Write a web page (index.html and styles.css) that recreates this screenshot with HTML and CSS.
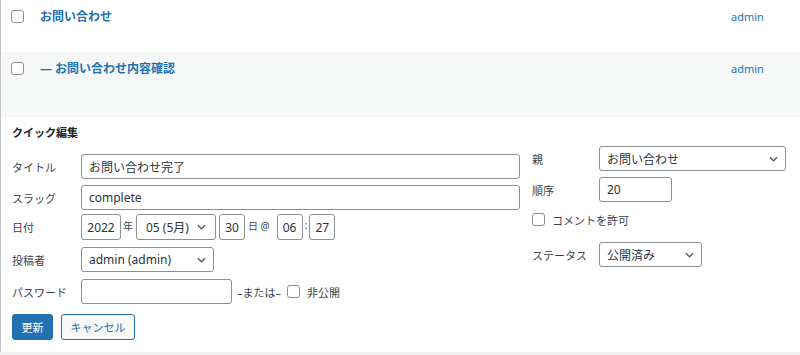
FILE: index.html
```html
<!DOCTYPE html>
<html lang="ja">
<head>
  <meta charset="UTF-8" />
  <title>固定ページ一覧</title>
  <link rel="stylesheet" href="styles.css">
</head>
<body>
  <div class="list">
    <div class="row">
      <span class="cb"></span>
      <a class="row-title">お問い合わせ</a>
      <a class="author">admin</a>
    </div>
    <div class="row alt tall">
      <span class="cb"></span>
      <a class="row-title">— お問い合わせ内容確認</a>
      <a class="author">admin</a>
    </div>

    <div class="quick-edit">
      <div class="qe-left">
        <h3 class="qe-title">クイック編集</h3>
        <div class="field">
          <span class="label">タイトル</span>
          <span class="input wide">お問い合わせ完了</span>
        </div>
        <div class="field f-slug">
          <span class="label">スラッグ</span>
          <span class="input wide">complete</span>
        </div>
        <div class="field f-date">
          <span class="label">日付</span>
          <span class="input num year">2022</span>
          <span class="unit">年</span>
          <span class="select month">05 (5月)
            <svg viewBox="0 0 10 6"><path d="M1 1l4 4 4-4"/></svg>
          </span>
          <span class="input num day">30</span>
          <span class="unit at">日 @</span>
          <span class="input num hm">06</span>
          <span class="unit colon">:</span>
          <span class="input num hm">27</span>
        </div>
        <div class="field f-author">
          <span class="label">投稿者</span>
          <span class="select author-sel">admin (admin)
            <svg viewBox="0 0 10 6"><path d="M1 1l4 4 4-4"/></svg>
          </span>
        </div>
        <div class="field f-pass">
          <span class="label">パスワード</span>
          <span class="input pass"></span>
          <span class="or">–または–</span>
          <span class="cb"></span>
          <span class="cb-label">非公開</span>
        </div>
        <div class="actions">
          <button class="btn primary">更新</button>
          <button class="btn secondary">キャンセル</button>
        </div>
      </div>

      <div class="qe-right">
        <div class="field">
          <span class="label r">親</span>
          <span class="select parent">お問い合わせ
            <svg viewBox="0 0 10 6"><path d="M1 1l4 4 4-4"/></svg>
          </span>
        </div>
        <div class="field f-order">
          <span class="label r">順序</span>
          <span class="input order">20</span>
        </div>
        <div class="check-row">
          <span class="cb"></span>
          <span class="cb-label">コメントを許可</span>
        </div>
        <div class="field f-status">
          <span class="label r">ステータス</span>
          <span class="select status">公開済み
            <svg viewBox="0 0 10 6"><path d="M1 1l4 4 4-4"/></svg>
          </span>
        </div>
      </div>
    </div>
  </div>
</body>
</html>
```

FILE: styles.css
```css
* { margin: 0; padding: 0; box-sizing: border-box; }
body {
  font-family: "Noto Sans", "Noto Sans CJK JP", sans-serif;
  background: #f0f0f1;
  color: #3c434a;
  font-size: 11px;
}
.list {
  background: #fff;
  border-left: 1px solid #c3c4c7;
}
.row {
  display: flex;
  align-items: flex-start;
  height: 52px;
  padding-top: 10px;
}
.row.alt { background: #f6f7f7; }
.row.tall { height: 65px; }
.cb {
  display: inline-block;
  width: 13px;
  height: 13px;
  border: 1px solid #8c8f94;
  border-radius: 3px;
  background: #fff;
  flex-shrink: 0;
}
.row .cb { margin-left: 10px; }
.row-title {
  color: #2271b1;
  font-weight: bold;
  font-size: 12px;
  line-height: 13px;
  margin-left: 16px;
  width: 691px;
}
.author {
  color: #2271b1;
  font-size: 11px;
  line-height: 13px;
}

.quick-edit {
  display: flex;
  height: 235px;
  padding: 0 12px 0 11px;
}
.qe-left {
  width: 508px;
  padding-top: 8px;
}
.qe-title {
  font-size: 11px;
  line-height: 16px;
  color: #1d2327;
  font-weight: bold;
  margin-bottom: 13px;
}
.qe-right {
  margin-left: 12px;
  padding-top: 29px;
}
.field {
  display: flex;
  align-items: center;
  height: 25px;
}
.f-slug { margin-top: 6px; }
.f-date { margin-top: 4px; height: 26px; }
.f-author { margin-top: 7px; }
.f-pass { margin-top: 7px; }
.f-order { margin-top: 6px; }
.f-status { margin-top: 16px; }
.label {
  width: 69px;
  flex-shrink: 0;
}
.label.r { width: 67px; }
.input, .select {
  display: flex;
  align-items: center;
  height: 25px;
  border: 1px solid #8c8f94;
  border-radius: 3px;
  background: #fff;
  color: #2c3338;
  font-size: 12px;
  padding: 0 7px;
}
.input.wide { flex: 1; }
.f-date .input, .f-date .select { height: 26px; }
.input.num { justify-content: center; padding: 0; }
.year { width: 40px; }
.day, .hm { width: 26px; }
.unit {
  font-size: 10px;
  align-self: flex-start;
  padding-top: 4px;
  margin: 0 3px 0 2px;
}
.unit.at { margin: 0 7px 0 3px; }
.unit.colon { margin: 0 2px; }
.select { justify-content: space-between; }
.select svg {
  width: 9px;
  height: 6px;
  fill: none;
  stroke: #50575e;
  stroke-width: 1.4;
}
.month { width: 80px; padding: 0 9px; margin-right: 3px; }
.author-sel { width: 133px; }
.pass { width: 151px; }
.or { margin: 0 6px 0 5px; }
.cb-label { margin-left: 7px; }
.parent { width: 187px; }
.order { width: 73px; }
.status { width: 103px; }
.check-row {
  display: flex;
  align-items: center;
  margin-top: 11px;
  height: 13px;
}
.actions {
  display: flex;
  gap: 8px;
  margin-top: 10px;
}
.btn {
  height: 26px;
  border-radius: 3px;
  font-family: inherit;
  font-size: 11px;
  padding: 0;
  white-space: nowrap;
}
.btn.primary {
  width: 41px;
  background: #2271b1;
  border: 1px solid #2271b1;
  color: #fff;
}
.btn.secondary {
  width: 74px;
  background: #f6f7f7;
  border: 1px solid #2271b1;
  color: #2271b1;
}
```
